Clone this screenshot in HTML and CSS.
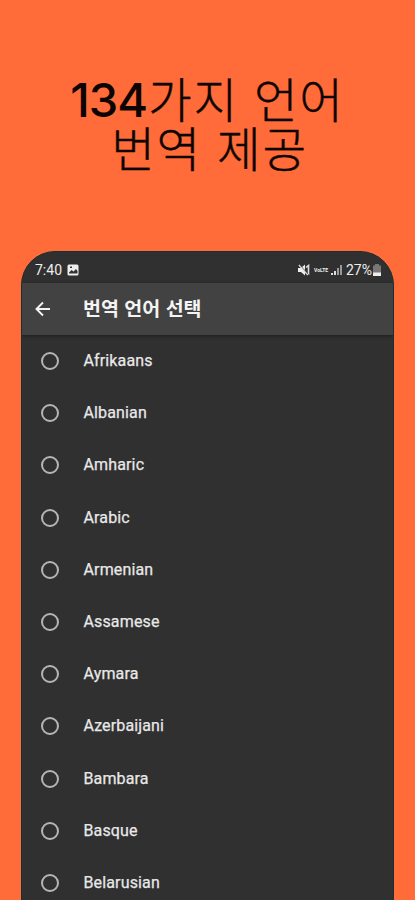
FILE: index.html
```html
<!DOCTYPE html>
<html lang="ko">
<head>
<meta charset="utf-8">
<title>번역 언어 선택</title>
<link rel="stylesheet" href="styles.css">
</head>
<body>
<h1 class="headline"><span class="line"><span class="number">134</span>가지 언어</span><span class="line second">번역 제공</span></h1>
<main class="phone">
  <div class="status">
    <span class="time">7:40</span>
    <svg class="photo" viewBox="0 0 12 12"><rect x=".5" y=".5" width="11" height="11" rx="1.5" fill="#eee"/><path d="M2 8.5 4.5 6l2 1.5L9 5l1.5 2v2.5H2zM3 2.5h2v1.5H3z" fill="#333"/></svg>
    <span class="spacer"></span>
    <svg class="mute" viewBox="0 0 12 12"><path d="M0 4h3l4-3.500v11L3 8H0z" fill="#eee"/><path d="M1 1l9 10M8 3.500l2.500-2v9.500" fill="none" stroke="#ddd" stroke-width="1.6"/><path d="M2 1l9 10" stroke="#333" stroke-width=".6"/></svg>
    <span class="volte">VoLTE</span>
    <svg class="signal" viewBox="0 0 12 12"><path d="M0 9h2v2H0zM3 7h2v4H3z" fill="#ddd"/><path d="M6 4h2v7H6zM9 1h2v10H9z" fill="#999"/></svg>
    <span class="percent">27%</span>
    <svg class="battery" viewBox="0 0 8 12"><path d="M2 0h4v1.500h2V9H0V1.500h2z" fill="#777"/><path d="M0 8.500h8V12H0z" fill="#eee"/></svg>
  </div>
  <header class="bar">
    <svg class="back" viewBox="0 0 16 16"><path d="M15 8H2M8 1.500 1.500 8 8 14.500" fill="none" stroke="#f4f4f4" stroke-width="1.9"/></svg>
    <h2 class="title">번역 언어 선택</h2>
  </header>
  <ul class="list">
    <li><i class="radio"></i><span>Afrikaans</span></li>
    <li><i class="radio"></i><span>Albanian</span></li>
    <li><i class="radio"></i><span>Amharic</span></li>
    <li><i class="radio"></i><span>Arabic</span></li>
    <li><i class="radio"></i><span>Armenian</span></li>
    <li><i class="radio"></i><span>Assamese</span></li>
    <li><i class="radio"></i><span>Aymara</span></li>
    <li><i class="radio"></i><span>Azerbaijani</span></li>
    <li><i class="radio"></i><span>Bambara</span></li>
    <li><i class="radio"></i><span>Basque</span></li>
    <li><i class="radio"></i><span>Belarusian</span></li>
  </ul>
</main>
</body>
</html>
```
FILE: styles.css
```css
* { box-sizing: border-box; }
body {
  margin: 0;
  height: 900px;
  overflow: hidden;
  display: flex;
  flex-direction: column;
  background: #ff6b39;
  font-family: Roboto, "Noto Sans CJK KR", sans-serif;
}
.headline {
  margin: 0;
  height: 251px;
  flex: none;
  padding-top: 74px;
  color: #0c0503;
  font: 300 47.5px/48.5px "Noto Sans CJK KR", sans-serif;
  letter-spacing: 1.7px;
  -webkit-text-stroke: .4px #0c0503;
}
.line {
  display: block;
  height: 48.5px;
  text-align: center;
  white-space: nowrap;
}
.second { padding-left: 4px; }
.number {
  margin-right: 1px;
  font-family: Inter, sans-serif;
  font-weight: 500;
  font-size: 47px;
  line-height: 1px;
  letter-spacing: -1px;
  vertical-align: 1px;
  -webkit-text-stroke: 0;
}
.phone {
  flex: none;
  width: 373px;
  height: 660px;
  margin-left: 21px;
  border: 1.5px solid #173034;
  border-radius: 34px 34px 0 0;
  overflow: hidden;
  background: #303030;
}
.status {
  display: flex;
  align-items: center;
  height: 31px;
  padding: 5px 12px 0 13px;
  background: #303030;
  color: #eee;
  font-size: 14px;
}
.photo { width: 12px; height: 12px; margin-left: 5px; }
.spacer { flex: 1; }
.mute { width: 12px; height: 12px; }
.volte { margin-left: 4px; width: 15px; font-size: 5px; font-weight: 700; }
.signal { width: 12px; height: 12px; margin-left: 2px; }
.percent { margin-left: 3px; }
.battery { width: 8px; height: 12px; margin-left: 1px; }
.bar {
  display: flex;
  align-items: center;
  height: 52px;
  padding-left: 13px;
  background: #424242;
  box-shadow: 0 1px 3px #1c1c1c;
  position: relative;
}
.back { width: 16px; height: 16px; }
.title {
  margin: -2px 0 0 32px;
  color: #f4f4f4;
  font: 700 19.5px/28px "Noto Sans CJK KR", sans-serif;
}
.list { margin: 0; padding: 0; list-style: none; }
.list li {
  display: flex;
  align-items: center;
  height: 52.2px;
  padding: 0 0 1px 19px;
  color: #e8e8e8;
  font-size: 16px;
  letter-spacing: .14px;
  -webkit-text-stroke: .25px #e8e8e8;
}
.radio {
  width: 18px;
  height: 18px;
  margin: 1px 24.5px 0 0;
  border: 2px solid #b5b5b5;
  border-radius: 50%;
}
```
